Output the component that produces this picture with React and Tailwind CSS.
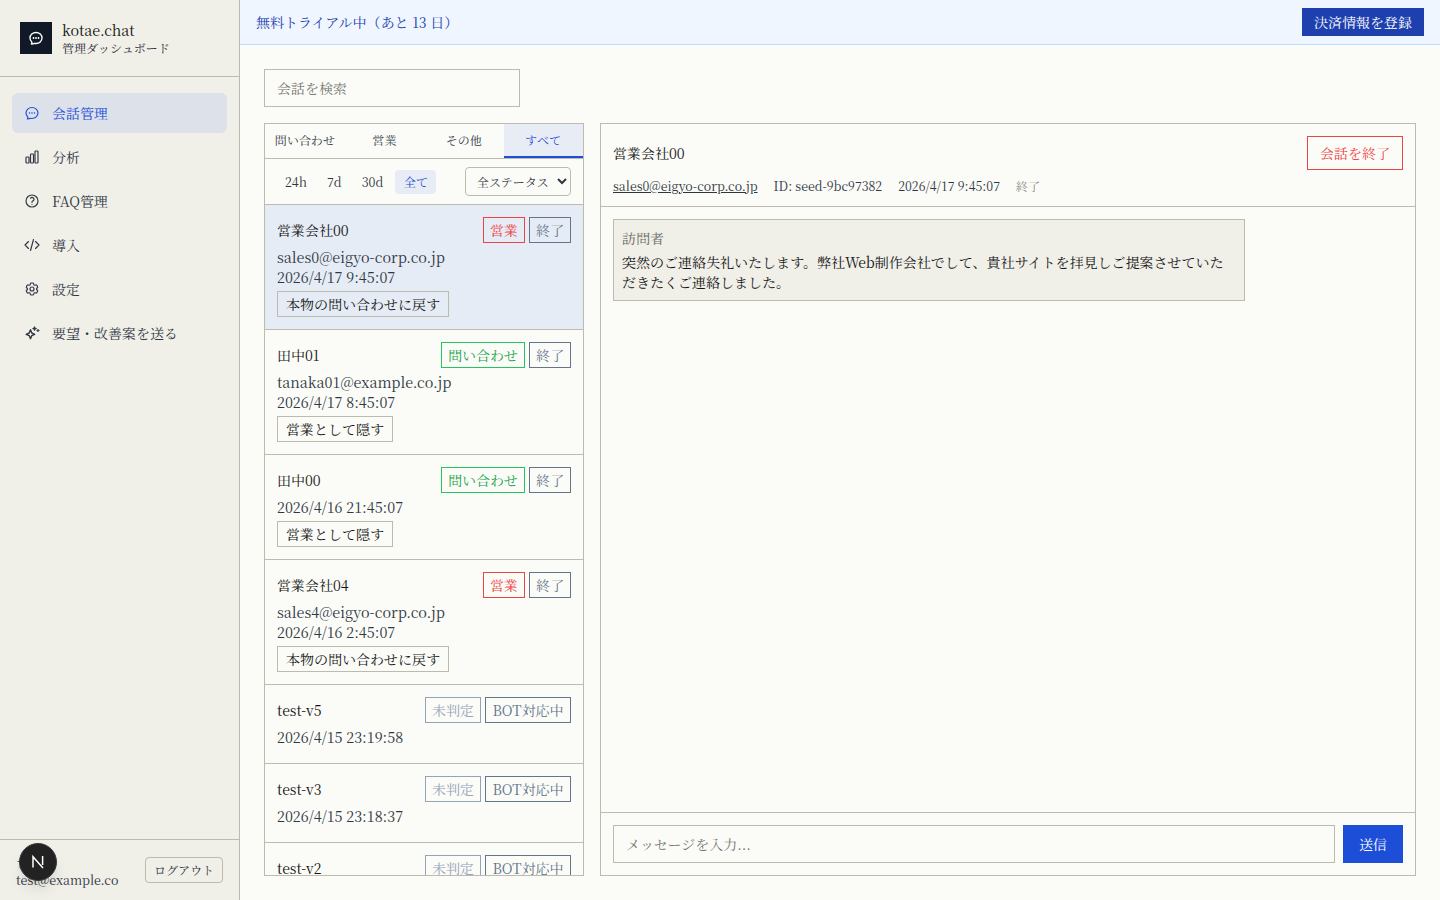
import React from "react";
import {
  HiOutlineChatBubbleOvalLeftEllipsis,
  HiOutlineChartBar,
  HiOutlineQuestionMarkCircle,
  HiOutlineCodeBracket,
  HiOutlineCog6Tooth,
} from "react-icons/hi2";

function Sparkle({ size = 16, className }) {
  return (
    <svg viewBox="0 0 16 16" width={size} height={size} className={className} fill="none" stroke="currentColor" strokeWidth="1.4" strokeLinejoin="round">
      <path d="M6.5 4.8 7.8 8l2.9 1.3-2.9 1.3-1.3 3.1-1.3-3.1-3-1.3 3-1.3z" />
      <path d="M10.5 1.5l.8 1.5 1.4.6-1.4.7-.8 1.5-.7-1.5-1.4-.7 1.4-.6z" fill="currentColor" strokeWidth="0.6" />
      <path d="M14 4.2l.5.9.9.4-.9.4-.5.9-.5-.9-.9-.4.9-.4z" fill="currentColor" strokeWidth="0.6" />
    </svg>
  );
}

const nav = [
  [HiOutlineChatBubbleOvalLeftEllipsis, "会話管理", true],
  [HiOutlineChartBar, "分析"],
  [HiOutlineQuestionMarkCircle, "FAQ管理"],
  [HiOutlineCodeBracket, "導入"],
  [HiOutlineCog6Tooth, "設定"],
  [Sparkle, "要望・改善案を送る"],
];

const cat = {
  sales: ["営業", "border-[#ef4444] text-[#ef4444]"],
  inq: ["問い合わせ", "border-[#22c55e] text-[#16a34a]"],
  none: ["未判定", "border-[#94a3b8] text-[#94a3b8]"],
};
const stat = {
  done: ["終了", "border-[#64748b] text-[#64748b]"],
  bot: ["BOT対応中", "border-[#64748b] text-[#64748b] w-[86px] justify-center"],
};

const rows = [
  { n: "営業会社00", c: "sales", s: "done", m: "sales0@eigyo-corp.co.jp", d: "2026/4/17 9:45:07", b: "本物の問い合わせに戻す", sel: true },
  { n: "田中01", c: "inq", s: "done", m: "tanaka01@example.co.jp", d: "2026/4/17 8:45:07", b: "営業として隠す" },
  { n: "田中00", c: "inq", s: "done", d: "2026/4/16 21:45:07", b: "営業として隠す" },
  { n: "営業会社04", c: "sales", s: "done", m: "sales4@eigyo-corp.co.jp", d: "2026/4/16 2:45:07", b: "本物の問い合わせに戻す" },
  { n: "test-v5", c: "none", s: "bot", d: "2026/4/15 23:19:58" },
  { n: "test-v3", c: "none", s: "bot", d: "2026/4/15 23:18:37" },
  { n: "test-v2", c: "none", s: "bot", d: "2026/4/15 23:17:20" },
];

function Badge({ v }) {
  return <span className={`border px-[6px] h-[26px] flex items-center text-sm leading-none ${v[1]}`}>{v[0]}</span>;
}

export default function App() {
  return (
    <div className="flex h-[900px] w-[1440px] overflow-hidden bg-[#fbfcf8] text-[#141414] font-['Noto_Serif_JP','Noto_Serif_CJK_JP','Liberation_Serif',serif]">
      <aside className="relative w-[240px] shrink-0 flex flex-col bg-[#f0efe8] border-r border-[#bdbbae]">
        <div className="h-[77px] shrink-0 border-b border-[#bdbbae] flex items-center gap-[10px] pl-5 pb-[1px]">
          <div className="w-8 h-8 bg-[#111827] flex items-center justify-center text-white">
            <HiOutlineChatBubbleOvalLeftEllipsis size={16} strokeWidth={2} />
          </div>
          <div>
            <div className="text-[14.4px] leading-[18px]">kotae.chat</div>
            <div className="text-[12px] leading-[16px] mt-[1px] -mb-[1px] text-[#1f2937]">管理ダッシュボード</div>
          </div>
        </div>
        <nav className="flex-1 px-3 pt-4 flex flex-col gap-1">
          {nav.map(([I, t, a]) => (
            <div key={t} className={`h-10 flex items-center gap-3 px-3 rounded-md text-sm ${a ? "bg-[#dde2ea] text-[#1d4ed8]" : "text-[#2f3743]"}`}>
              <I size={16} strokeWidth={1.75} className="shrink-0" />
              <span>{t}</span>
            </div>
          ))}
        </nav>
        <div className="h-[61px] shrink-0 border-t border-[#bdbbae] flex items-center justify-between pl-4 pr-4 pt-[2px]">
          <div className="text-[12.48px] leading-[18px] text-[#2f3743]">
            <div>テスト</div>
            <div>test@example.co</div>
          </div>
          <button className="h-[26px] w-[78px] -mt-[2px] rounded border border-[#bdbbae] text-[12px] text-[#2f3743]">ログアウト</button>
        </div>
        <div className="absolute left-[19px] top-[843px] w-[38px] h-[38px] rounded-full bg-[#222] border border-[#3a3a3a] shadow-lg flex items-center justify-center">
          <svg viewBox="0 0 16 16" className="w-4 h-4" fill="none" stroke="#fff" strokeWidth="1.5">
            <path d="M3 13.5V2.8L13 14M12.6 2v9" />
          </svg>
        </div>
      </aside>

      <div className="flex-1 flex flex-col min-w-0">
        <div className="h-[45px] shrink-0 bg-[#eff6ff] border-b border-[#bfdbfe] flex items-center justify-between pl-4 pr-4">
          <span className="text-sm text-[#1e40af]">無料トライアル中（あと 13 日）</span>
          <button className="h-7 px-3 bg-[#1e40af] text-white text-sm">決済情報を登録</button>
        </div>
        <main className="flex-1 flex flex-col p-6 pb-6 min-h-0">
          <input placeholder="会話を検索" className="w-[256px] h-[38px] shrink-0 border border-[#bdbbae] px-3 text-sm placeholder:text-[#78786f] outline-none" />
          <div className="flex-1 flex gap-4 mt-4 min-h-0">
            <section className="w-[320px] shrink-0 border border-[#bdbbae] flex flex-col min-h-0">
              <div className="flex h-[35px] shrink-0 border-b border-[#bdbbae] text-xs text-[#2f3743]">
                {["問い合わせ", "営業", "その他"].map((t) => (
                  <div key={t} className="flex-1 flex items-center justify-center border-b-2 border-transparent">{t}</div>
                ))}
                <div className="flex-1 flex items-center justify-center bg-[#e8edf5] text-[#1d4ed8] border-b-2 border-[#1d4ed8]">すべて</div>
              </div>
              <div className="h-[46px] shrink-0 border-b border-[#bdbbae] flex items-center justify-between pl-3 pr-3">
                <div className="flex gap-1 text-[12.48px] text-[#2f3743]">
                  {["24h", "7d", "30d"].map((t) => (
                    <span key={t} className="px-2 py-[2px] leading-[20px]">{t}</span>
                  ))}
                  <span className="px-2 py-[2px] leading-[20px] rounded-sm bg-[#e8edf5] text-[#1d4ed8]">全て</span>
                </div>
                <select className="w-[106px] h-[29px] rounded border border-[#bdbbae] text-xs pl-[7px] bg-[#fbfcf8] text-[#2f3743]">
                  <option>全ステータス</option>
                </select>
              </div>
              <div className="flex-1 overflow-hidden">
                {rows.map((r) => (
                  <div key={r.n} className={`px-3 pt-3 border-b border-[#bdbbae] ${r.b ? "pb-3" : "pb-4"} ${r.sel ? "bg-[#e6ecf5]" : ""}`}>
                    <div className="flex items-center justify-between h-[26px]">
                      <span className="text-sm">{r.n}</span>
                      <div className="flex gap-1">
                        <Badge v={cat[r.c]} />
                        <Badge v={stat[r.s]} />
                      </div>
                    </div>
                    <div className="text-[14.4px] leading-5 text-[#2f3743] mt-1">
                      {r.m && <div>{r.m}</div>}
                      <div className="h-5">{r.d}</div>
                    </div>
                    {r.b && (
                      <button className="mt-1 h-[26px] px-2 border border-[#bdbbae] text-sm flex items-center">{r.b}</button>
                    )}
                  </div>
                ))}
              </div>
            </section>

            <section className="flex-1 border border-[#bdbbae] flex flex-col min-w-0">
              <div className="h-[83px] shrink-0 border-b border-[#bdbbae] px-3 pt-3">
                <div className="flex items-center justify-between h-[34px]">
                  <span className="text-sm">営業会社00</span>
                  <button className="h-[34px] px-3 border border-[#ef4444] text-[#ef4444] text-sm">会話を終了</button>
                </div>
                <div className="flex items-center gap-4 mt-[6px] text-[12.4px] leading-5 text-[#2f3743]">
                  <span className="underline">sales0@eigyo-corp.co.jp</span>
                  <span>ID: seed-9bc97382</span>
                  <span>2026/4/17 9:45:07</span>
                  <span className="text-[#8b8b84] text-xs">終了</span>
                </div>
              </div>
              <div className="flex-1 p-3">
                <div className="w-[632px] border border-[#bdbbae] bg-[#f0efe8] px-2 py-2">
                  <div className="text-sm leading-5 text-[#6b6b63]">訪問者</div>
                  <p className="text-sm leading-5 mt-1">突然のご連絡失礼いたします。弊社Web制作会社でして、貴社サイトを拝見しご提案させていただきたくご連絡しました。</p>
                </div>
              </div>
              <div className="h-[63px] shrink-0 border-t border-[#bdbbae] flex items-center gap-2 px-3">
                <input placeholder="メッセージを入力..." className="flex-1 h-[38px] border border-[#bdbbae] px-3 text-sm placeholder:text-[#78786f] outline-none" />
                <button className="h-[38px] w-[60px] bg-[#1d4ed8] text-white text-sm">送信</button>
              </div>
            </section>
          </div>
        </main>
      </div>
    </div>
  );
}
